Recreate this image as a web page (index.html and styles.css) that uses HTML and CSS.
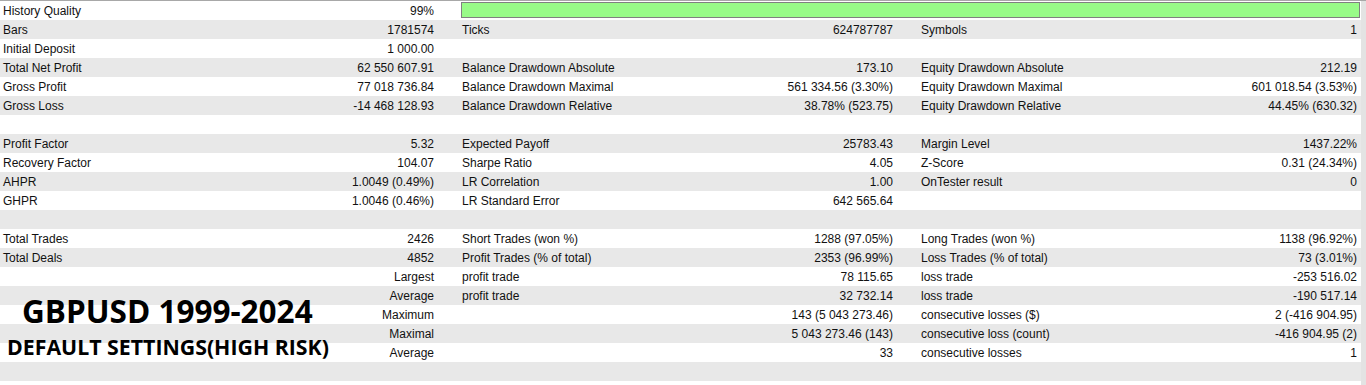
FILE: index.html
```html
<!DOCTYPE html>
<html>
<head>
<meta charset="utf-8">
<link rel="stylesheet" href="styles.css">
</head>
<body>
<div class="page">
  <div class="report">
    <div class="row">
      <div class="cell"><span>History Quality</span><span>99%</span></div>
      <div class="cell span2"><div class="quality-bar"></div></div>
    </div>
    <div class="row">
      <div class="cell"><span>Bars</span><span>1781574</span></div>
      <div class="cell"><span>Ticks</span><span>624787787</span></div>
      <div class="cell last"><span>Symbols</span><span>1</span></div>
    </div>
    <div class="row">
      <div class="cell"><span>Initial Deposit</span><span>1 000.00</span></div>
      <div class="cell"></div>
      <div class="cell last"></div>
    </div>
    <div class="row">
      <div class="cell"><span>Total Net Profit</span><span>62 550 607.91</span></div>
      <div class="cell"><span>Balance Drawdown Absolute</span><span>173.10</span></div>
      <div class="cell last"><span>Equity Drawdown Absolute</span><span>212.19</span></div>
    </div>
    <div class="row">
      <div class="cell"><span>Gross Profit</span><span>77 018 736.84</span></div>
      <div class="cell"><span>Balance Drawdown Maximal</span><span>561 334.56 (3.30%)</span></div>
      <div class="cell last"><span>Equity Drawdown Maximal</span><span>601 018.54 (3.53%)</span></div>
    </div>
    <div class="row">
      <div class="cell"><span>Gross Loss</span><span>-14 468 128.93</span></div>
      <div class="cell"><span>Balance Drawdown Relative</span><span>38.78% (523.75)</span></div>
      <div class="cell last"><span>Equity Drawdown Relative</span><span>44.45% (630.32)</span></div>
    </div>
    <div class="row"></div>
    <div class="row">
      <div class="cell"><span>Profit Factor</span><span>5.32</span></div>
      <div class="cell"><span>Expected Payoff</span><span>25783.43</span></div>
      <div class="cell last"><span>Margin Level</span><span>1437.22%</span></div>
    </div>
    <div class="row">
      <div class="cell"><span>Recovery Factor</span><span>104.07</span></div>
      <div class="cell"><span>Sharpe Ratio</span><span>4.05</span></div>
      <div class="cell last"><span>Z-Score</span><span>0.31 (24.34%)</span></div>
    </div>
    <div class="row">
      <div class="cell"><span>AHPR</span><span>1.0049 (0.49%)</span></div>
      <div class="cell"><span>LR Correlation</span><span>1.00</span></div>
      <div class="cell last"><span>OnTester result</span><span>0</span></div>
    </div>
    <div class="row">
      <div class="cell"><span>GHPR</span><span>1.0046 (0.46%)</span></div>
      <div class="cell"><span>LR Standard Error</span><span>642 565.64</span></div>
      <div class="cell last"></div>
    </div>
    <div class="row"></div>
    <div class="row">
      <div class="cell"><span>Total Trades</span><span>2426</span></div>
      <div class="cell"><span>Short Trades (won %)</span><span>1288 (97.05%)</span></div>
      <div class="cell last"><span>Long Trades (won %)</span><span>1138 (96.92%)</span></div>
    </div>
    <div class="row">
      <div class="cell"><span>Total Deals</span><span>4852</span></div>
      <div class="cell"><span>Profit Trades (% of total)</span><span>2353 (96.99%)</span></div>
      <div class="cell last"><span>Loss Trades (% of total)</span><span>73 (3.01%)</span></div>
    </div>
    <div class="row">
      <div class="cell"><span></span><span>Largest</span></div>
      <div class="cell"><span>profit trade</span><span>78 115.65</span></div>
      <div class="cell last"><span>loss trade</span><span>-253 516.02</span></div>
    </div>
    <div class="row">
      <div class="cell"><span></span><span>Average</span></div>
      <div class="cell"><span>profit trade</span><span>32 732.14</span></div>
      <div class="cell last"><span>loss trade</span><span>-190 517.14</span></div>
    </div>
    <div class="row">
      <div class="cell"><span></span><span>Maximum</span></div>
      <div class="cell"><span></span><span>143 (5 043 273.46)</span></div>
      <div class="cell last"><span>consecutive losses ($)</span><span>2 (-416 904.95)</span></div>
    </div>
    <div class="row">
      <div class="cell"><span></span><span>Maximal</span></div>
      <div class="cell"><span></span><span>5 043 273.46 (143)</span></div>
      <div class="cell last"><span>consecutive loss (count)</span><span>-416 904.95 (2)</span></div>
    </div>
    <div class="row">
      <div class="cell"><span></span><span>Average</span></div>
      <div class="cell"><span></span><span>33</span></div>
      <div class="cell last"><span>consecutive losses</span><span>1</span></div>
    </div>
    <div class="row"></div>
  </div>
  <div class="scrollbar"></div>
  <div class="caption">
    <div class="caption-title">GBPUSD 1999-2024</div>
    <div class="caption-sub">DEFAULT SETTINGS(HIGH RISK)</div>
  </div>
</div>
</body>
</html>
```

FILE: styles.css
```css
html, body {
  margin: 0;
  padding: 0;
  background: #ffffff;
}

.page {
  position: relative;
  display: flex;
  width: 1366px;
  height: 385px;
  overflow: hidden;
  border-top: 1px solid #a8a8a8;
  box-sizing: border-box;
  font-family: "Liberation Sans", Arial, sans-serif;
  font-size: 12px;
  color: #111111;
}

.report {
  flex: 1;
  display: flex;
  flex-direction: column;
}

.row {
  display: grid;
  grid-template-columns: 459px 459px 1fr;
  grid-template-rows: 19px;
  height: 19px;
  flex: none;
}

.row:nth-child(even) {
  background: #e8e8e8;
}

.cell {
  display: flex;
  justify-content: space-between;
  padding: 1px 25px 0 3px;
  line-height: 19px;
  white-space: nowrap;
}

.cell.last {
  padding-right: 4px;
}

.cell.span2 {
  grid-column: 2 / span 2;
  padding: 1px 1px 1px 2px;
  display: block;
}

.quality-bar {
  height: 16px;
  background: #98fb88;
  border: 1px solid #808080;
  box-sizing: border-box;
}

.scrollbar {
  width: 5px;
  flex: none;
  background: #e3e3e3;
}

.caption {
  position: absolute;
  left: 0;
  top: 290px;
  font-family: "Open Sans", sans-serif;
  font-weight: 700;
  color: #000000;
}

.caption-title {
  font-size: 31.5px;
  line-height: 40px;
  padding-left: 22px;
}

.caption-sub {
  font-size: 21.3px;
  line-height: 28px;
  padding-top: 2px;
  padding-left: 7px;
}
```
